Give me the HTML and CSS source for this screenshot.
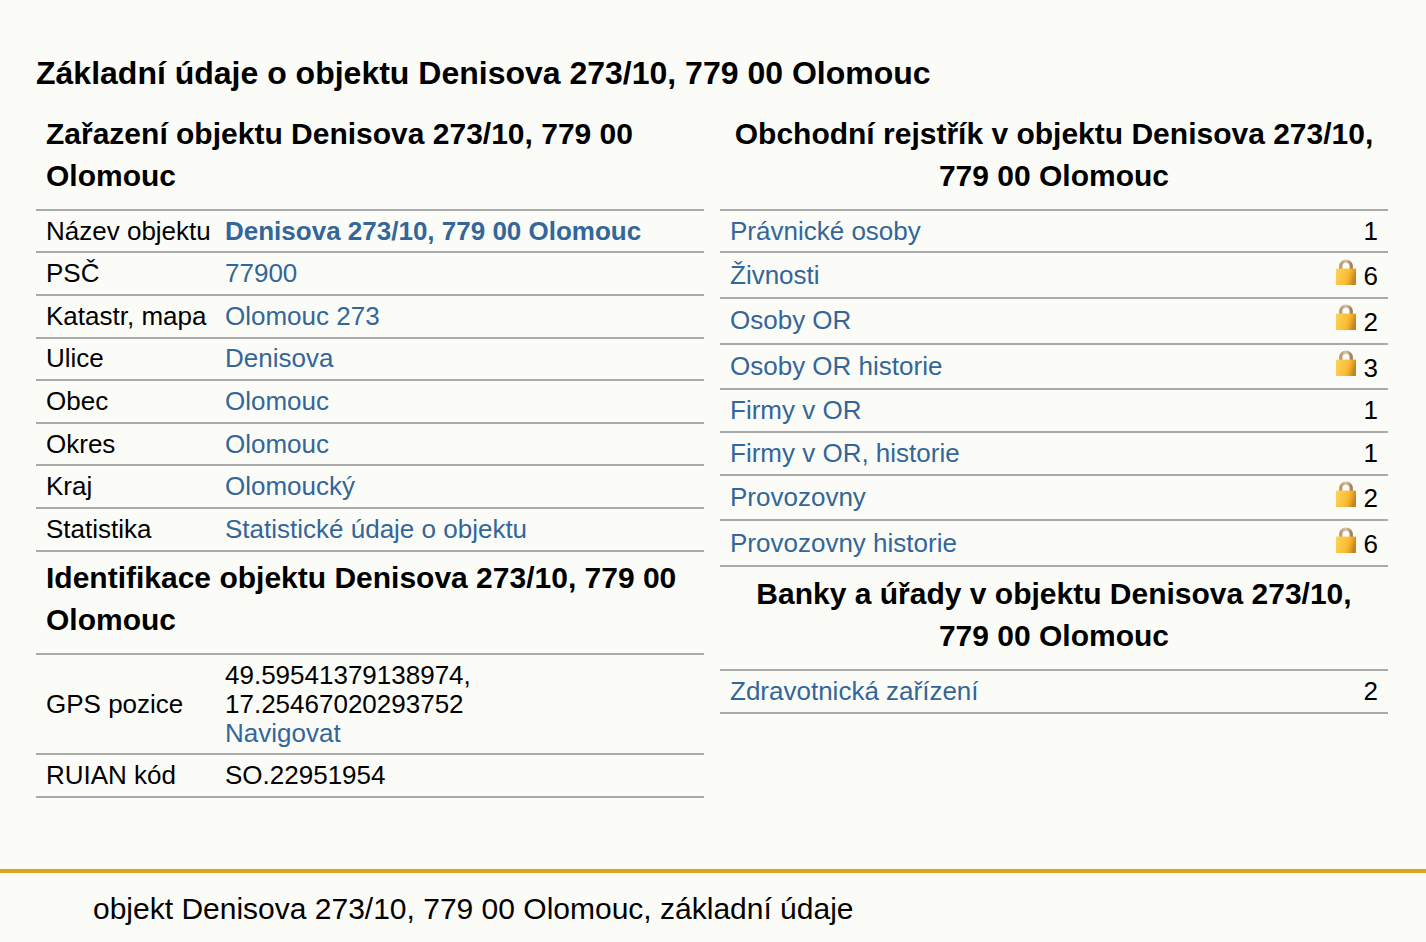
FILE: index.html
```html
<!DOCTYPE html>
<html lang="cs">
<head>
<meta charset="utf-8">
<title>Denisova 273/10</title>
<link rel="stylesheet" href="styles.css">
</head>
<body>
<svg class="defs" width="0" height="0" aria-hidden="true">
  <defs>
    <linearGradient id="lockBody" x1="0" y1="0" x2="1" y2="0.25">
      <stop offset="0" stop-color="#fdd35c"/>
      <stop offset="0.65" stop-color="#fabb33"/>
      <stop offset="0.85" stop-color="#e6a128"/>
      <stop offset="1" stop-color="#c4871f"/>
    </linearGradient>
    <linearGradient id="lockShackle" x1="0" y1="0" x2="1" y2="0">
      <stop offset="0" stop-color="#b99b70"/>
      <stop offset="0.5" stop-color="#d9c6a6"/>
      <stop offset="1" stop-color="#9c825c"/>
    </linearGradient>
    <symbol id="lock" viewBox="0 0 20 26">
      <path d="M4.8 11V7.2a5.2 5.2 0 0 1 10.4 0V11" fill="none" stroke="url(#lockShackle)" stroke-width="3.4"/>
      <rect y="9.5" width="20" height="16.5" fill="url(#lockBody)"/>
    </symbol>
  </defs>
</svg>
<main class="page">
  <h1 class="title">Základní údaje o objektu Denisova 273/10, 779 00 Olomouc</h1>
  <div class="columns">
    <section class="col">
      <h2 class="head">Zařazení objektu Denisova 273/10, 779 00 Olomouc</h2>
      <table class="info keyed">
        <tr><td class="key">Název objektu</td><td><a class="strong" href="#">Denisova 273/10, 779 00 Olomouc</a></td></tr>
        <tr><td class="key">PSČ</td><td><a href="#">77900</a></td></tr>
        <tr><td class="key">Katastr, mapa</td><td><a href="#">Olomouc 273</a></td></tr>
        <tr><td class="key">Ulice</td><td><a href="#">Denisova</a></td></tr>
        <tr><td class="key">Obec</td><td><a href="#">Olomouc</a></td></tr>
        <tr><td class="key">Okres</td><td><a href="#">Olomouc</a></td></tr>
        <tr><td class="key">Kraj</td><td><a href="#">Olomoucký</a></td></tr>
        <tr><td class="key">Statistika</td><td><a href="#">Statistické údaje o objektu</a></td></tr>
      </table>
      <h2 class="head">Identifikace objektu Denisova 273/10, 779 00 Olomouc</h2>
      <table class="info keyed">
        <tr class="gps"><td class="key">GPS pozice</td><td>49.59541379138974,<br>17.25467020293752<br><a href="#">Navigovat</a></td></tr>
        <tr><td class="key">RUIAN kód</td><td>SO.22951954</td></tr>
      </table>
    </section>
    <section class="col">
      <h2 class="head center">Obchodní rejstřík v objektu Denisova 273/10, 779 00 Olomouc</h2>
      <table class="info">
        <tr><td><a href="#">Právnické osoby</a></td><td class="num">1</td></tr>
        <tr><td><a href="#">Živnosti</a></td><td class="num locked"><svg class="lock"><use href="#lock"/></svg> 6</td></tr>
        <tr><td><a href="#">Osoby OR</a></td><td class="num locked"><svg class="lock"><use href="#lock"/></svg> 2</td></tr>
        <tr><td><a href="#">Osoby OR historie</a></td><td class="num locked"><svg class="lock"><use href="#lock"/></svg> 3</td></tr>
        <tr><td><a href="#">Firmy v OR</a></td><td class="num">1</td></tr>
        <tr><td><a href="#">Firmy v OR, historie</a></td><td class="num">1</td></tr>
        <tr><td><a href="#">Provozovny</a></td><td class="num locked"><svg class="lock"><use href="#lock"/></svg> 2</td></tr>
        <tr><td><a href="#">Provozovny historie</a></td><td class="num locked"><svg class="lock"><use href="#lock"/></svg> 6</td></tr>
      </table>
      <h2 class="head center">Banky a úřady v objektu Denisova 273/10, 779 00 Olomouc</h2>
      <table class="info">
        <tr><td><a href="#">Zdravotnická zařízení</a></td><td class="num">2</td></tr>
      </table>
    </section>
  </div>
</main>
<footer class="foot">objekt Denisova 273/10, 779 00 Olomouc, základní údaje</footer>
</body>
</html>
```
FILE: styles.css
```css
html, body { margin: 0; padding: 0; }
body {
  background: #fbfcf8;
  color: #000;
  font-family: "Liberation Sans", Arial, sans-serif;
  font-size: 26px;
}
.defs { position: absolute; }
a { color: #336699; text-decoration: none; }
a.strong { font-weight: bold; }
.page { padding: 55px 38px 71.3px 36px; }
.title { margin: 0 0 14.95px; font-size: 32px; line-height: 37px; font-weight: bold; }
.columns { display: grid; grid-template-columns: 668px 668px; column-gap: 16px; }
.head { margin: 0; padding: 5.6px 10px 12.3px; font-size: 30px; line-height: 42px; font-weight: bold; }
.center { text-align: center; }
.info { width: 100%; border-collapse: collapse; border-top: 2px solid #aaa; }
.keyed { table-layout: fixed; }
.info td { padding: 5.8px 10px; border-bottom: 2px solid #aaa; vertical-align: middle; line-height: 29px; }
.info .gps td { padding-top: 5.4px; padding-bottom: 5.4px; }
.info td.key { width: 159px; white-space: nowrap; }
.num { text-align: right; white-space: nowrap; }
.info td.locked { padding-bottom: 6.3px; }
.lock { width: 20px; height: 26.2px; margin-top: -0.6px; vertical-align: baseline; }
.foot {
  border-top: 4px solid #daa520;
  padding: 18px 0 16px 93px;
  font-size: 30px;
  line-height: 35px;
}
```
